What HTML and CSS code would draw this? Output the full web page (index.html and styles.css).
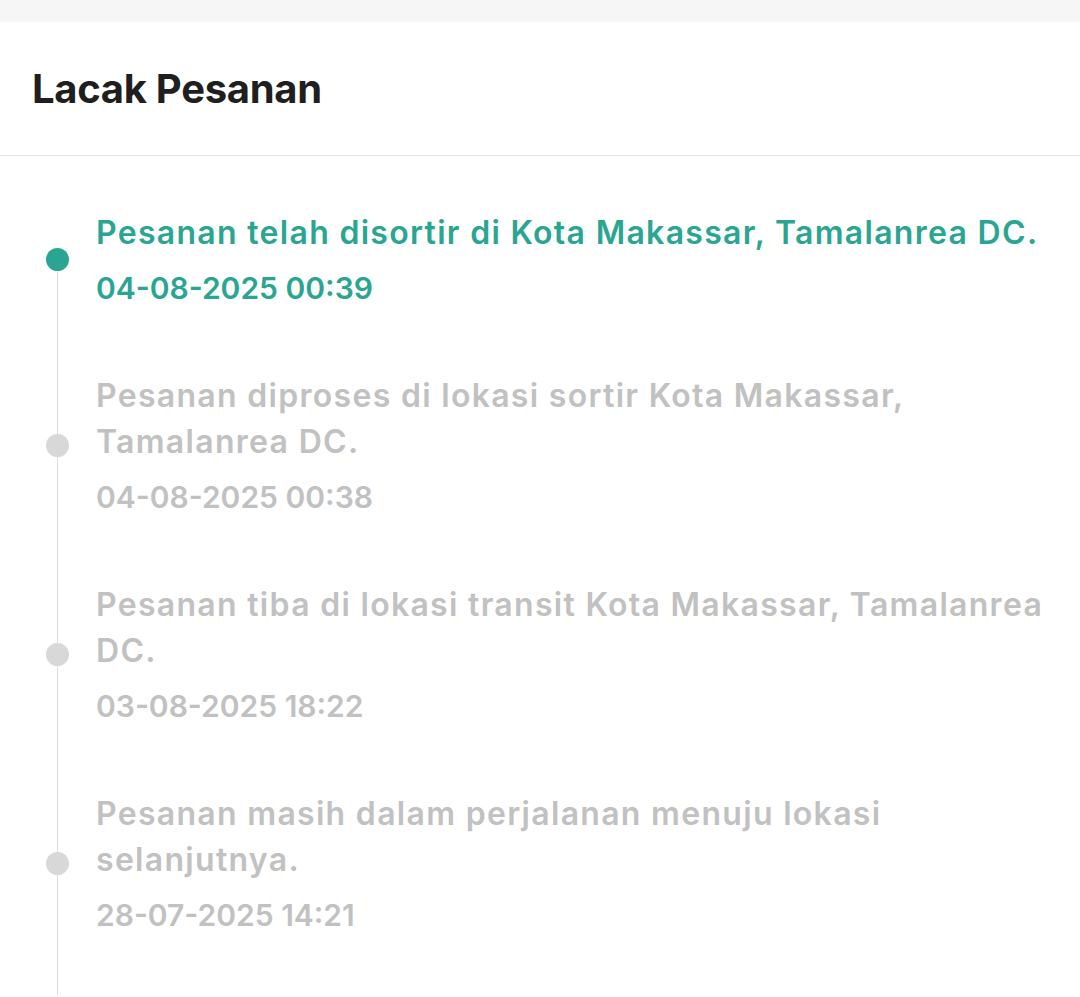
FILE: index.html
```html
<!DOCTYPE html>
<html lang="id">
<head>
<meta charset="utf-8">
<title>Lacak Pesanan</title>
<link rel="stylesheet" href="styles.css">
</head>
<body>
<div class="topbar"></div>
<header class="header">
  <h1 class="header-title">Lacak Pesanan</h1>
</header>
<main class="timeline">
  <div class="item item-first item-active">
    <div class="rail"><span class="dot"></span></div>
    <div class="content">
      <div class="title">Pesanan telah disortir di Kota Makassar, Tamalanrea DC.</div>
      <div class="date">04-08-2025 00:39</div>
    </div>
  </div>
  <div class="item">
    <div class="rail"><span class="dot"></span></div>
    <div class="content">
      <div class="title">Pesanan diproses di lokasi sortir Kota Makassar, Tamalanrea DC.</div>
      <div class="date">04-08-2025 00:38</div>
    </div>
  </div>
  <div class="item">
    <div class="rail"><span class="dot"></span></div>
    <div class="content">
      <div class="title">Pesanan tiba di lokasi transit Kota Makassar, Tamalanrea DC.</div>
      <div class="date">03-08-2025 18:22</div>
    </div>
  </div>
  <div class="item item-last">
    <div class="rail"><span class="dot"></span></div>
    <div class="content">
      <div class="title">Pesanan masih dalam perjalanan menuju lokasi selanjutnya.</div>
      <div class="date">28-07-2025 14:21</div>
    </div>
  </div>
</main>
</body>
</html>
```

FILE: styles.css
```css
* { box-sizing: border-box; }
html, body {
  margin: 0;
  padding: 0;
  background: #ffffff;
  font-family: Inter, "Noto Sans", "Liberation Sans", sans-serif;
}
body { height: 997px; overflow: hidden; }
.topbar {
  height: 22px;
  background: #f6f6f6;
}
.header {
  height: 134px;
  border-bottom: 1px solid #e6e6e6;
  display: flex;
  align-items: center;
  padding: 0 32px;
}
.header-title {
  margin: 0;
  font-size: 40px;
  font-weight: 700;
  color: #1f1f1f;
  letter-spacing: -0.3px;
}
.timeline {
  padding: 54px 32px 0 46px;
}
.item {
  display: flex;
  padding-bottom: 65px;
}
.item-last { padding-bottom: 60px; }
.rail {
  position: relative;
  width: 23px;
  flex: 0 0 23px;
  display: flex;
  align-items: center;
  justify-content: center;
}
.rail::before {
  content: "";
  position: absolute;
  left: 11px;
  width: 1px;
  top: 0;
  bottom: -65px;
  background: #dcdcdc;
}
.item-first .rail::before { top: 50%; }
.item-last .rail::before { bottom: -60px; }
.dot {
  position: relative;
  width: 23px;
  height: 23px;
  border-radius: 50%;
  background: #d8d8d8;
}
.item-active .dot { background: #2aa591; }
.content {
  margin-left: 27px;
  flex: 1;
  color: #c1c1c1;
  font-weight: 600;
}
.title {
  font-size: 32px;
  line-height: 46px;
  letter-spacing: 1.3px;
}
.date {
  margin-top: 12px;
  font-size: 30px;
  line-height: 40px;
}
.item-active .content { color: #2aa591; }
```
